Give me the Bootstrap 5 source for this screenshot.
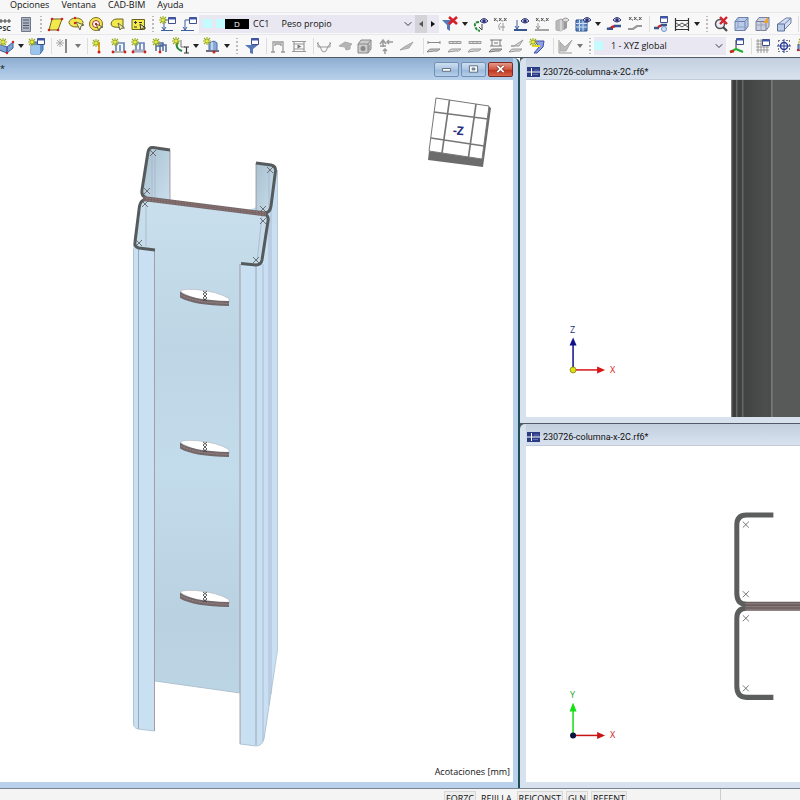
<!DOCTYPE html>
<html lang="es">
<head>
<meta charset="utf-8">
<meta name="viewport" content="width=device-width, initial-scale=1">
<title>230726-columna-x-2C.rf6*</title>
<link rel="stylesheet" href="https://cdn.jsdelivr.net/npm/bootstrap@5.3.0/dist/css/bootstrap.min.css">
<style>
body{font-family:"Open Sans","Noto Sans",sans-serif;font-size:9px;line-height:12px;color:#111;background:#f7f7f7}
.app-menu{height:12px;padding-left:10px;gap:12px;line-height:10px}
.app-menu a{color:#111}
.tool-row{height:22px;overflow:hidden;background:#f8f8f8;border-top:1px solid #e8e8ec}
.tool-row>*{flex:none}
.row-a>.tg:first-child{margin-left:-6px}
.row-b{height:23px;padding-bottom:1px}
.row-b>.tg:first-child{margin-left:-5px}
.tg{display:grid;grid-auto-flow:column;grid-auto-columns:1fr}
.n1{width:21px}.n2{width:42px}.n4{width:83px}.n5{width:103px}.n6{width:123px}
.tool-row button{border:0;padding:0;background:none;display:flex;align-items:center;justify-content:center}
.tool-row .tg svg{width:18px;height:18px}
.drop{width:10px;height:20px}
.drop::after{content:"";border:3px solid transparent;border-top:4px solid #222;border-bottom:0}
.dim::after{border-top-color:#777}
.sep{width:5px;height:16px;border-right:1px solid #ddd}
.sep-w{width:7px}
.grip{width:9px;height:16px;background:radial-gradient(circle,#bbb 1px,transparent 1px) center/4px 4px repeat-y}
.combo{height:18px;background:#e9e8f2}
.combo-case{width:240px}
.combo-axes{width:132px}
.swatch{width:9px;height:9px;background:#c4fbff}
.case-tag{width:24px;height:10px;background:#000;color:#fff;line-height:10px;font-size:8px}
.combo .form-select{font-size:9px;line-height:12px;border:0;border-radius:0;background-color:transparent;background-size:8px 8px;background-position:right 3px center;padding:0 14px 0 0;color:#111;min-height:0}
.step{width:12px;height:18px}
.tool-row .step-off{background:#d4d4d8}
.work{border-top:1px solid #4f5a66;min-height:0}
.win{background:#d8e2ef;padding:0 0 6px 6px;flex:1 1 0;min-height:0}
.win-main{flex:0 0 65%;background:#b9d1ea;padding:0 5px 6px 0;border-right:2px solid #1e4f55;border-radius:0 6px 0 0}
.side{background:#4f5a66;min-width:0;gap:1px}
.side .win{border-radius:5px 0 0 0}
.bar{height:22px;background:linear-gradient(#8fadd0,#a3c0e0 50%,#b9d1ea)}
.side .bar{background:linear-gradient(#c3cfde,#d8e2ef);padding:6px 0 0 1px;gap:3px;font-family:Roboto,"Open Sans",sans-serif;border-bottom:1px solid #c2ccd9}
.bar svg{width:13px;height:10px}
.win-btns{gap:2px}
.win-btn{width:25px;height:15px;padding:0;border:1px solid #6f8fb5;border-radius:2px;background:linear-gradient(#cfdff0,#a9c5e2 50%,#98b7d9 51%,#b5cfea);display:flex;align-items:center;justify-content:center}
.win-close{border-color:#7c2a22;background:linear-gradient(#e59a8a,#d0533d 50%,#bb2f1a 51%,#d8654c)}
.canvas{background:#fff;min-height:0;overflow:hidden}
.canvas>svg{display:block;width:100%;height:100%}
.units{right:3px;bottom:4px}
.app-status{height:12px;overflow:hidden;border-top:1px solid #7b858f;background:#f4f4f4;padding-left:444px;gap:3px}
.app-status button{border:1px solid #d8d8d8;background:#ededed;padding:0 1px;font-size:9px;line-height:12px;margin-top:2px;height:16px;color:#111}
.app-status .flat{background:none;border-color:transparent}
.app-status .rule{margin-left:90px;border-left:1px solid #ccc}
</style>
<script src="https://cdn.jsdelivr.net/npm/bootstrap@5.3.0/dist/js/bootstrap.bundle.min.js"></script>
</head>
<body class="vh-100 d-flex flex-column overflow-hidden m-0">
<svg width="0" height="0" class="position-absolute" aria-hidden="true">
<defs>
<linearGradient id="steel" x1="0" x2="1"><stop offset="0" stop-color="#3a3d3c"/><stop offset=".5" stop-color="#4b4e4d"/><stop offset="1" stop-color="#454847"/></linearGradient>
<linearGradient id="web" x1="0" y1="0" x2="0" y2="1"><stop offset="0" stop-color="#c9dfee"/><stop offset=".3" stop-color="#bdd5e4"/><stop offset=".55" stop-color="#c3dceb"/><stop offset=".85" stop-color="#b9d1e1"/><stop offset="1" stop-color="#bcd5e5"/></linearGradient>
<linearGradient id="lip" x1="0" y1="0" x2="1" y2="1"><stop offset="0" stop-color="#a9c0cf"/><stop offset="1" stop-color="#c9dfee"/></linearGradient>
<g id="burst"><path d="M4 0v8M0 4h8M1 1l6 6M7 1l-6 6" stroke="#9aa81a" stroke-width="1.1"/><circle cx="4" cy="4" r="1.6" fill="#e8ec3c"/></g>
<g id="pane"><path d="M.5.500h7v6h-7z" fill="#fff" stroke="#3f4f8c"/><path d="M.5.500h7v2h-7z" fill="#3f56a8"/></g>
<g id="eye"><path d="M0 3q4-5 8 0q-4 4-8 0z" fill="#dde" stroke="#2c3470"/><circle cx="4" cy="3" r="1.800" fill="#27307c"/></g>
<g id="tick" stroke="#555" stroke-width=".8"><path d="M-3-3L3 3M3-3L-3 3"/></g>
<g id="xxx" stroke="#555" stroke-width="1"><path d="M0 0l2.500 3M2.500 0L0 3M5 0l2.500 3M7.500 0L5 3M10 0l2.500 3M12.500 0L10 3M3.500 2.500v1M8.700 2.500v1"/></g>
<g id="cubeshape"><path d="M0 4l3-4h10v9l-3 4H0zM0 4h10v9M10 4l3-4"/></g>
</defs>
<symbol id="i-calc" viewBox="0 0 18 18"><path d="M4.500 2.500h9v14h-9z" fill="#aeb6c4" stroke="#6f788a"/><path d="M6 5h6M6 8h6M6 10.500h6M6 13h6" stroke="#4c5568"/></symbol>
<symbol id="i-poly" viewBox="0 0 18 18"><path d="M6 4h10l-4 11H3z" fill="#f4e94c" stroke="#6b651a"/><g fill="#c22"><circle cx="6" cy="4" r="1.300"/><circle cx="16" cy="4" r="1.300"/><circle cx="12" cy="15" r="1.300"/><circle cx="3" cy="15" r="1.300"/></g></symbol>
<symbol id="i-ell" viewBox="0 0 18 18"><ellipse cx="9" cy="7.500" rx="7" ry="4.500" fill="#f4e94c" stroke="#7c6a20"/><path d="M9 7l4 8 1-4 3-1z" fill="#fff6a0" stroke="#665"/><circle cx="8" cy="3" r="1.200" fill="#c22"/><circle cx="8" cy="8" r="1.200" fill="#c22"/></symbol>
<symbol id="i-ring" viewBox="0 0 18 18"><circle cx="9" cy="9" r="6.500" fill="#f4e94c" stroke="#7c6a20"/><circle cx="9" cy="9" r="3.500" fill="#fff" stroke="#a33"/><path d="M9 9l3 7 1-3 3-1z" fill="#f4e94c" stroke="#665"/><circle cx="9" cy="9" r="1.200" fill="#c22"/></symbol>
<symbol id="i-blob" viewBox="0 0 18 18"><path d="M3 9q1-5 6-5h6v9q-7-1-9-1-3-1-3-3z" fill="#f4e94c" stroke="#6b651a"/><path d="M10 8l2 7 1.500-2 3 0z" fill="#fff6a0" stroke="#665"/></symbol>
<symbol id="i-calcy" viewBox="0 0 18 18"><path d="M3 4.500h12.500v10H3z" fill="#f4e94c" stroke="#6b651a"/><path d="M5 7.500h3M6.500 6v3M5 12h3M10 7.500h3M11 9l1 6 1.500-2 3 0z" stroke="#333" fill="#fff6a0"/></symbol>
<symbol id="i-newload" viewBox="0 0 18 18"><path d="M2 5h9M5 5v10M2 15.500h12M3 12l2 3 2-3" stroke="#3c5f9e" fill="none"/><use href="#burst" y="1"/><use href="#pane" x="9" y="2"/></symbol>
<symbol id="i-load" viewBox="0 0 18 18"><use href="#pane" x="9" y="2"/><path d="M5 5v10M1 15.500h13M3 12l2 3 2-3M5 5h4" stroke="#3c5f9e" fill="none"/></symbol>
<symbol id="i-funx" viewBox="0 0 18 18"><path d="M1 5h12l-4 5v6l-3-2v-4z" fill="#5577b8"/><path d="M8 2l8 7M16 2L8 9" stroke="#d5202a" stroke-width="2.600"/></symbol>
<symbol id="i-eyeg" viewBox="0 0 18 18"><use href="#eye" x="9" y="3"/><path d="M8 7q-5 0-4 4t5 5" stroke="#278a3c" fill="none" stroke-dasharray="3 1" stroke-width="2"/><path d="M11 9v6M8 12l3 3" stroke="#444"/></symbol>
<symbol id="i-xa" viewBox="0 0 18 18"><use href="#xxx" x="2" y="3"/><path d="M9 8q-4 2-1 7M11 8v8M8 12h5" stroke="#999" fill="none"/></symbol>
<symbol id="i-eyed" viewBox="0 0 18 18"><use href="#eye" x="9" y="3"/><path d="M5 5v9M3 11l2 3 2-3" stroke="#3c5f9e" fill="none"/><path d="M2 15h13" stroke="#35558f" stroke-width="2"/></symbol>
<symbol id="i-xb" viewBox="0 0 18 18"><use href="#xxx" x="3" y="3"/><path d="M5 8v6M3 11l2 3 2-3" stroke="#999" fill="none"/><path d="M2 15h14" stroke="#888" stroke-width="1.500"/></symbol>
<symbol id="i-gcube" viewBox="0 0 18 18"><path d="M3 6l5-2 3 1v9l-3 2-5-1z" fill="#bbb" stroke="#aaa"/><path d="M8 5v11" stroke="#eee"/><path d="M11 6l3-1v8l-3 2z" fill="#999"/><path d="M9 5q4-4 7 0q-3 4-7 0z" fill="#ddd" stroke="#999"/></symbol>
<symbol id="i-grideye" viewBox="0 0 18 18"><path d="M2 5h11v11H2z" fill="#5d88c4" stroke="#2d4f88"/><path d="M5.500 5v11M9 5v11M2 8.500h11M2 12h11" stroke="#cfe0f4"/><use href="#eye" x="9" y="2"/></symbol>
<symbol id="i-eyer" viewBox="0 0 18 18"><use href="#eye" x="8" y="2"/><path d="M2 14l5-1.500V14zM2 13.500h5" stroke="#35558f" stroke-width="2"/><path d="M6 12.500l4-1.500" stroke="#c22" stroke-width="2.500"/><path d="M9 11h7" stroke="#35558f" stroke-width="2.500"/></symbol>
<symbol id="i-xc" viewBox="0 0 18 18"><use href="#xxx" x="3" y="2"/><path d="M2 14h5l4-3h5" stroke="#999" stroke-width="2.200" fill="none"/></symbol>
<symbol id="i-res" viewBox="0 0 18 18"><use href="#pane" x="8" y="1"/><path d="M2 13h5" stroke="#35558f" stroke-width="2.500"/><path d="M6 12l4-2" stroke="#c22" stroke-width="2.500"/><path d="M9 10h6" stroke="#35558f" stroke-width="2.500"/><circle cx="12" cy="14" r="2.500" fill="#cfe0f4" stroke="#6d94cc"/></symbol>
<symbol id="i-film" viewBox="0 0 18 18"><path d="M2.500 3v13M15.500 3v13M2 5.500h14M2 14.500h14" stroke="#333" fill="none" stroke-width="1.200"/><path d="M3 8l3 2 3-2 3 2 3-2M3 12l3-2 3 2 3-2 3 2" stroke="#555" fill="none"/></symbol>
<symbol id="i-zoomx" viewBox="0 0 18 18"><circle cx="8" cy="9" r="4.500" fill="#e8eef6" stroke="#555" stroke-width="1.500"/><path d="M11 12l4 4" stroke="#444" stroke-width="2.200"/><path d="M8 2l7 7M15 2L8 9" stroke="#d5202a" stroke-width="2.400"/></symbol>
<symbol id="i-cube1" viewBox="0 0 18 18"><use href="#cubeshape" x="2" y="2.500" fill="#b9cbe8" stroke="#6b80aa"/><path d="M5 3v9h10M5 12l-3 3" stroke="#8ba0c8" fill="none"/></symbol>
<symbol id="i-cube2" viewBox="0 0 18 18"><use href="#cubeshape" x="2" y="2.500" fill="#c9cfe0" stroke="#7b809a"/><path d="M2 10h10M7 7v9" stroke="#98a0b8"/><path d="M9 8l5-6v6z" fill="#eda32c"/></symbol>
<symbol id="i-cube3" viewBox="0 0 18 18"><path d="M3 9l8-6h5v5l-6 6" fill="#d5def0" stroke="#6b80aa"/><path d="M2.500 9h7v7h-7z" fill="#b9cbe8" stroke="#5b709a"/><path d="M9.500 9L16 3" stroke="#6b80aa"/></symbol>
<symbol id="i-solid" viewBox="0 0 18 18"><path d="M2 7l8 3v6l-8-3zM10 10l6-5v6l-6 5z" fill="#7fa3d8" stroke="#3d5f9c"/><use href="#burst" x="2" y="1"/><g fill="#c22"><circle cx="10" cy="16" r="1.200"/><circle cx="16" cy="5" r="1.200"/><circle cx="2" cy="13" r="1.200"/></g></symbol>
<symbol id="i-box" viewBox="0 0 18 18"><path d="M3 8l3-3h9v8l-3 4H3z" fill="#5d92cc" stroke="#3d6fa8"/><path d="M3 8h9v9H3z" fill="#9cc4ec"/><use href="#burst" y="1"/><use href="#pane" x="9" y="1"/></symbol>
<symbol id="i-linex" viewBox="0 0 18 18"><g stroke="#aaa"><path d="M6 2v8M2 6h8M3 3l6 6M9 3L3 9"/></g><path d="M12 2v14" stroke="#777" stroke-width="1.700"/></symbol>
<symbol id="i-node" viewBox="0 0 18 18"><path d="M10 5v9" stroke="#e0a020" stroke-width="2"/><use href="#burst" x="3" y="2"/><circle cx="10" cy="15" r="1.500" fill="#c22"/></symbol>
<symbol id="i-beam" viewBox="0 0 18 18"><path d="M6 14V6h8v8M10 8v6" stroke="#6587bc" stroke-width="1.700" fill="none"/><path d="M3 15h12" stroke="#777"/><use href="#burst" x="1" y="1"/><g fill="#c22"><circle cx="3" cy="15" r="1.400"/><circle cx="15" cy="15" r="1.400"/></g></symbol>
<symbol id="i-beams" viewBox="0 0 18 18"><path d="M6 14V6h8v8M10 6v8" stroke="#6587bc" stroke-width="1.700" fill="none"/><path d="M3 13h12v2H3z" fill="#b8c4dc" stroke="#99a"/><use href="#burst" x="1" y="1"/><g fill="#c22"><circle cx="3" cy="15" r="1.400"/><circle cx="15" cy="15" r="1.400"/></g></symbol>
<symbol id="i-frames" viewBox="0 0 18 18"><path d="M5 14V6h7v8M9 15V8h6v7M5 9h7" stroke="#4d6a9c" stroke-width="1.500" fill="none"/><use href="#burst" x="1" y="1"/><circle cx="9" cy="15" r="1.400" fill="#c22"/></symbol>
<symbol id="i-sect" viewBox="0 0 18 18"><path d="M6 4q-4 7 4 10" stroke="#278a3c" stroke-width="2" fill="none"/><path d="M9 3v7h4" stroke="#777" fill="none"/><use href="#burst"/><path d="M12 10h5M14.500 10v6M12 16h5" stroke="#333" stroke-width="1.200"/></symbol>
<symbol id="i-bars" viewBox="0 0 18 18"><path d="M6 6l5-2 3 2v8H6z" fill="#86a9d8" stroke="#4a6ea8"/><path d="M9 5v9" stroke="#fff"/><path d="M3 14h13" stroke="#6b6f80" stroke-width="2"/><use href="#burst"/><circle cx="11" cy="15" r="1.500" fill="#c22"/></symbol>
<symbol id="i-funnel" viewBox="0 0 18 18"><path d="M2 8h13l-5 4v5l-3-1v-4z" fill="#5577b8"/><use href="#pane" x="8" y="1"/></symbol>
<symbol id="i-arch" viewBox="0 0 18 18"><path d="M4 15V5h10v10M2 15h4M12 15h4M6 9V7h6v2" stroke="#999" fill="none" stroke-width="1.300"/></symbol>
<symbol id="i-play" viewBox="0 0 18 18"><path d="M4 4v11M14 4v11M2 4.500h14M2 14.500h14M4 7h10v5H4z" stroke="#999" fill="none" stroke-width="1.200"/><path d="M7.500 7.500l4 2-4 2z" fill="#777"/></symbol>
<symbol id="i-curve" viewBox="0 0 18 18"><path d="M3 5v5h12V5M2 6q3 2 5 8 2 2 4 0 2-6 5-8" stroke="#999" fill="none"/></symbol>
<symbol id="i-wedge" viewBox="0 0 18 18"><path d="M3 9l6-4 7 2-2 2 0 3-4 1-1-3z" fill="#b4b4b4" stroke="#aaa"/></symbol>
<symbol id="i-die" viewBox="0 0 18 18"><use href="#cubeshape" x="2" y="3" fill="#ccc" stroke="#888"/><circle cx="7" cy="11.500" r="2.500" fill="#888"/><path d="M13 8v5" stroke="#888"/></symbol>
<symbol id="i-arrows" viewBox="0 0 18 18"><path d="M6 3v7M3 7l3-4 3 4M3 9h6M10 5h6M12 3l-2 2 2 2M8 17v-4M6 14l2-2 2 2" stroke="#999" fill="none" stroke-width="1.500"/></symbol>
<symbol id="i-blade" viewBox="0 0 18 18"><path d="M2 13l4-3 9-5-4 6z" fill="#bbb" stroke="#aaa"/></symbol>
<symbol id="i-ra" viewBox="0 0 18 18"><path d="M3 5.500h12M3 4v3M15 4v3M2 15q2-4 6-3h7q-2 3-6 2z" stroke="#888" fill="#ccc"/></symbol>
<symbol id="i-rb" viewBox="0 0 18 18"><path d="M3 4.500h12v2H3zM7 4v3M11 4v3M2 15q2-4 6-3h7q-2 3-6 2z" stroke="#999" fill="#ddd"/></symbol>
<symbol id="i-rc" viewBox="0 0 18 18"><path d="M3 3h12M3 9h12M5 3v6M13 3v6M7 6h4M2 15q2-4 6-3h7q-2 3-6 2z" stroke="#777" fill="#ccc"/></symbol>
<symbol id="i-rd" viewBox="0 0 18 18"><path d="M4 9l3 0 9-6-4 6zM2 15q2-4 6-3h7q-2 3-6 2z" stroke="#999" fill="#ddd"/></symbol>
<symbol id="i-re" viewBox="0 0 18 18"><path d="M7 4h9l-1 6-6 6H6l5-6z" fill="#8d9fe0" stroke="#3c4fac"/><path d="M4 9l8 0" stroke="#e6dc20" stroke-width="2"/><use href="#burst" x="1" y="1"/></symbol>
<symbol id="i-diag" viewBox="0 0 18 18"><path d="M3 3v13h13" stroke="#999" fill="none"/><path d="M4 5l5 5 7-7-6 11H4z" fill="#bbb" stroke="#aaa"/></symbol>
<symbol id="i-axes" viewBox="0 0 18 18"><path d="M8 12V3" stroke="#333"/><use href="#pane" x="8" y="1"/><path d="M8 12l-6 3" stroke="#2b2" stroke-width="2"/><path d="M2 15l4-1" stroke="#c22" stroke-width="2.500"/><path d="M8 12l7 3" stroke="#2a3" stroke-width="2"/></symbol>
<symbol id="i-gridp" viewBox="0 0 18 18"><path d="M2 4h13M2 7h13M2 10h13M2 13h13M4 2v14M7 2v14M10 2v14M13 2v14" stroke="#888" stroke-width=".8"/><use href="#pane" x="8" y="2"/></symbol>
<symbol id="i-snap" viewBox="0 0 18 18"><path d="M3 3.500h12M3 14.500h12M3.500 3v12M14.500 3v12" stroke="#778" stroke-dasharray="2 2"/><circle cx="9" cy="9" r="3.500" fill="none" stroke="#2c3f9c" stroke-width="1.500"/><path d="M9 2v14M2 9h14" stroke="#2c3f9c"/></symbol>
<symbol id="i-flag" viewBox="0 0 13 10"><path d="M0 0h13v10H0z" fill="#2b3c86"/><path d="M0 5h13M4.500 1v8" stroke="#fff"/><path d="M7 3h5M6 7.500h5" stroke="#6672b4"/></symbol>
</svg>

<nav class="app-menu d-flex flex-shrink-0" aria-label="Menú">
<a class="text-decoration-none" href="#">Opciones</a><a class="text-decoration-none" href="#">Ventana</a><a class="text-decoration-none" href="#">CAD-BIM</a><a class="text-decoration-none" href="#">Ayuda</a>
</nav>

<div class="tool-row row-a d-flex align-items-center flex-shrink-0" role="toolbar" aria-label="Casos de carga">
<div class="tg n2"><button aria-label="PSC"><svg viewBox="0 0 18 18"><path d="M3 6h12M5 4v4M9 4v4M13 4v4" stroke="#444" fill="none"/><text x="2" y="16" font-size="7" font-weight="700" fill="#333">PSC</text></svg></button><button aria-label="Calculadora"><svg><use href="#i-calc"/></svg></button></div>
<span class="grip"></span>
<div class="tg n5"><button aria-label="Polígono"><svg><use href="#i-poly"/></svg></button><button aria-label="Elipse"><svg><use href="#i-ell"/></svg></button><button aria-label="Anillo"><svg><use href="#i-ring"/></svg></button><button aria-label="Contorno"><svg><use href="#i-blob"/></svg></button><button aria-label="Fórmula"><svg><use href="#i-calcy"/></svg></button></div>
<span class="grip"></span>
<div class="tg n2"><button aria-label="Nueva carga"><svg><use href="#i-newload"/></svg></button><button aria-label="Carga"><svg><use href="#i-load"/></svg></button></div>
<div class="combo combo-case d-flex align-items-center">
<span class="swatch ms-1"></span><span class="swatch ms-1"></span><span class="case-tag text-center">D</span>
<label class="ms-1" for="lc">CC1</label>
<select id="lc" class="form-select flex-fill w-auto ms-2 ps-1"><option>Peso propio</option></select>
<button class="step step-off" aria-label="Anterior"><svg width="4" height="6"><path d="M4 0v6L0 3z" fill="#555"/></svg></button><button class="step" aria-label="Siguiente"><svg width="4" height="6"><path d="M0 0v6l4-3z" fill="#111"/></svg></button>
</div>
<div class="tg n1"><button aria-label="Quitar filtro"><svg><use href="#i-funx"/></svg></button></div><button class="drop" aria-label="Más"></button>
<div class="tg n6"><button aria-label="Ver apoyos"><svg><use href="#i-eyeg"/></svg></button><button aria-label="Valores de apoyos"><svg><use href="#i-xa"/></svg></button><button aria-label="Ver cargas"><svg><use href="#i-eyed"/></svg></button><button aria-label="Valores de cargas"><svg><use href="#i-xb"/></svg></button><button aria-label="Sólido"><svg><use href="#i-gcube"/></svg></button><button aria-label="Ver malla"><svg><use href="#i-grideye"/></svg></button></div><button class="drop" aria-label="Más"></button>
<div class="tg n2"><button aria-label="Ver resultados"><svg><use href="#i-eyer"/></svg></button><button aria-label="Valores de resultados"><svg><use href="#i-xc"/></svg></button></div>
<span class="sep"></span>
<div class="tg n2"><button aria-label="Resultados"><svg><use href="#i-res"/></svg></button><button aria-label="Animación"><svg><use href="#i-film"/></svg></button></div><button class="drop" aria-label="Más"></button>
<span class="grip"></span>
<div class="tg n4"><button aria-label="Zoom"><svg><use href="#i-zoomx"/></svg></button><button aria-label="Vista 1"><svg><use href="#i-cube1"/></svg></button><button aria-label="Vista 2"><svg><use href="#i-cube2"/></svg></button><button aria-label="Vista 3"><svg><use href="#i-cube3"/></svg></button></div>
<span class="sep"></span>
</div>

<div class="tool-row row-b d-flex align-items-center flex-shrink-0" role="toolbar" aria-label="Modelo">
<div class="tg n1"><button aria-label="Sólido nuevo"><svg><use href="#i-solid"/></svg></button></div><button class="drop" aria-label="Más"></button>
<div class="tg n1"><button aria-label="Caja"><svg><use href="#i-box"/></svg></button></div><span class="sep"></span>
<div class="tg n1"><button aria-label="Línea"><svg><use href="#i-linex"/></svg></button></div><button class="drop dim" aria-label="Más"></button><span class="sep"></span>
<div class="tg n5"><button aria-label="Nudo"><svg><use href="#i-node"/></svg></button><button aria-label="Barra"><svg><use href="#i-beam"/></svg></button><button aria-label="Barras"><svg><use href="#i-beams"/></svg></button><button aria-label="Pórtico"><svg><use href="#i-frames"/></svg></button><button aria-label="Sección"><svg><use href="#i-sect"/></svg></button></div><button class="drop" aria-label="Más"></button>
<div class="tg n1"><button aria-label="Conjunto"><svg><use href="#i-bars"/></svg></button></div><button class="drop" aria-label="Más"></button>
<span class="grip"></span>
<div class="tg n1"><button aria-label="Filtro"><svg><use href="#i-funnel"/></svg></button></div><span class="sep"></span>
<div class="tg n2"><button aria-label="Marco"><svg><use href="#i-arch"/></svg></button><button aria-label="Reproducir"><svg><use href="#i-play"/></svg></button></div><span class="sep"></span>
<div class="tg n5"><button aria-label="Diagrama"><svg><use href="#i-curve"/></svg></button><button aria-label="Superficie"><svg><use href="#i-wedge"/></svg></button><button aria-label="Volumen"><svg><use href="#i-die"/></svg></button><button aria-label="Reacciones"><svg><use href="#i-arrows"/></svg></button><button aria-label="Corte"><svg><use href="#i-blade"/></svg></button></div><span class="sep sep-w"></span>
<div class="tg n6"><button aria-label="Resultado 1"><svg><use href="#i-ra"/></svg></button><button aria-label="Resultado 2"><svg><use href="#i-rb"/></svg></button><button aria-label="Resultado 3"><svg><use href="#i-rb"/></svg></button><button aria-label="Resultado 4"><svg><use href="#i-rc"/></svg></button><button aria-label="Resultado 5"><svg><use href="#i-rd"/></svg></button><button aria-label="Resultado nuevo"><svg><use href="#i-re"/></svg></button></div><span class="sep sep-w"></span>
<div class="tg n1"><button aria-label="Gráfico"><svg><use href="#i-diag"/></svg></button></div><button class="drop dim" aria-label="Más"></button>
<span class="grip"></span>
<div class="combo combo-axes d-flex align-items-center"><span class="swatch"></span><select class="form-select flex-fill w-auto ms-2" aria-label="Sistema de coordenadas"><option>1 - XYZ global</option></select></div>
<div class="tg n1"><button aria-label="Ejes"><svg><use href="#i-axes"/></svg></button></div><span class="sep"></span>
<div class="tg n2"><button aria-label="Rejilla"><svg><use href="#i-gridp"/></svg></button><button aria-label="Forzar cursor"><svg><use href="#i-snap"/></svg></button></div>
<div class="tg n1"><button aria-label="Plano"><svg><use href="#i-solid"/></svg></button></div>
</div>

<main class="work d-flex flex-fill">
<section class="win-main d-flex flex-column" aria-label="Vista principal">
<header class="bar d-flex align-items-center flex-shrink-0">
<span>*</span>
<div class="win-btns d-flex ms-auto flex-shrink-0">
<button class="win-btn" aria-label="Minimizar"><svg viewBox="0 0 13 11"><path d="M2 5h9v3H2z" fill="#fff" stroke="#567"/></svg></button>
<button class="win-btn" aria-label="Restaurar"><svg viewBox="0 0 13 11"><path d="M2 2h9v7H2z" fill="#fff" stroke="#567"/><path d="M5 4.500h3v2H5z" fill="#9bd" stroke="#567"/></svg></button>
<button class="win-btn win-close" aria-label="Cerrar"><svg viewBox="0 0 13 11"><path d="M3 2l7 7M10 2L3 9" stroke="#7a2a20" stroke-width="3.500"/><path d="M3 2l7 7M10 2L3 9" stroke="#fff" stroke-width="2"/></svg></button>
</div>
</header>
<div class="canvas flex-fill position-relative">
<svg viewBox="0 80 513 702" preserveAspectRatio="xMinYMin meet" role="img" aria-label="Columna en 3D">
<path d="M277 172V650L270 700 264 739Q262 746 256 746L240 744V693L155 681V731L138 729Q133 727 133 722V245H155L262 205z" fill="#c6deef"/>
<path d="M148 149L170 150V202L143 196z" fill="url(#lip)"/><path d="M256 163L276 167 269 213 256 211z" fill="url(#lip)"/>
<path d="M142 200L268 215 262 264 240 263V693L155 681V249L135 247z" fill="url(#web)"/>
<path d="M133 249h22v482l-17-2q-5-2-5-7zM240 264l22 1 6-42h9V650L264 739Q262 746 256 746L240 744z" fill="#c8e0f2"/>
<g fill="none" stroke-width=".8"><path d="M138.500 249V729M256 266V745" stroke="#8d9aab"/><path d="M154.500 250V731M240 264V744M170 150V200M256 163V210" stroke="#9a8b93"/><path d="M263 264V741M269 218V705M271 210V694M152 154V197M155 155V198M146 205V246M262 216L257 262M269 169V212" stroke="#a7b3cb"/><path d="M133.500 249V722Q133 728 138 729L154 731M155 681L240 693M240 744L256 746Q262 746 264 739L270 700 277.500 650V170" stroke="#a8bccb"/></g>
<g fill="none" stroke="#555a5c" stroke-width="3"><path d="M170 150L153 147.500Q149 147 148 152L142 190Q141 196 146 197.500"/><path d="M256 163L271 165Q276 166 275.500 171L271 206Q270 213 265 213"/><path d="M155 250L139 248Q134 247 135 242L139.500 206Q141 199 147 199.500"/><path d="M241 263.500L256 265Q261 265 262 260L268 221Q269 216 265 214"/></g>
<path d="M143 198.500L266 214" stroke="#716568" stroke-width="5"/><path d="M146 198L266 213M146 200L266 215" stroke="#a07774" stroke-width=".8" stroke-dasharray="2 1"/>
<g><use href="#tick" x="153" y="153"/><use href="#tick" x="147" y="191"/><use href="#tick" x="270" y="170"/><use href="#tick" x="263" y="209"/><use href="#tick" x="145" y="204"/><use href="#tick" x="139" y="243"/><use href="#tick" x="263" y="221"/><use href="#tick" x="256" y="260"/></g>
<g id="hole"><path d="M180.500 292L182 290Q186 289 196 289.500 218 291.500 229 298.500V303Q200 303 180.500 292z" fill="#fff" stroke="#a9b2ba" stroke-width=".6"/><path d="M180 291.500Q190 300 229 301V306Q194 305.500 180 297.500z" fill="#72686b"/><path d="M181 295Q193 302.500 229 303.500" fill="none" stroke="#b08c86" stroke-width=".8" stroke-dasharray="2 1"/><path d="M203 291l4 3-4 4 4 3M207 291l-4 3 4 4-4 3" fill="none" stroke="#333" stroke-width=".8"/></g>
<use href="#hole" y="151"/><use href="#hole" y="301"/>
<path d="M429 151L482 159 483 167 428 160zM482 159L488 106 491 108 483 167z" fill="#6c6c6c"/>
<path d="M436 98L489 106 482 159 429 151z" fill="#fff" stroke="#777"/>
<path d="M434 112L488 119M431 138L484 146M449.500 100L442 153M476 104L468.500 157" stroke="#777" stroke-width="1.700" fill="none"/>
<text x="453" y="135" font-size="12" font-weight="700" fill="#25307f" transform="rotate(4 459 130)">-Z</text>
</svg>
<div class="units position-absolute">Acotaciones [mm]</div>
</div>
</section>
<div class="side d-flex flex-column flex-fill">
<section class="win d-flex flex-column" aria-label="Vista XZ">
<header class="bar d-flex align-items-center flex-shrink-0"><svg><use href="#i-flag"/></svg><span>230726-columna-x-2C.rf6*</span></header>
<div class="canvas flex-fill"><svg viewBox="526 80 274 336" preserveAspectRatio="xMinYMin slice" role="img" aria-label="Alzado">
<path d="M731 79h69v338h-69z" fill="url(#steel)"/><path d="M771 79h29v338h-29z" fill="#575a59"/>
<path d="M731.500 79v338M736.500 79v338M742.500 79v338" stroke="#777b79"/><path d="M771.500 79v338" stroke="#8c908e"/>
<path d="M573 370V343" stroke="#10108a" stroke-width="1.500"/><path d="M573 337l3.500 8h-7z" fill="#10108a"/><path d="M573 369.500h25" stroke="#d81414" stroke-width="1.500"/><path d="M605 369.500l-8-3.500v7z" fill="#d81414"/><circle cx="573" cy="369.500" r="3" fill="#dede10" stroke="#77770c" stroke-width=".7"/>
<text x="570" y="333" font-size="9" fill="#25307f">Z</text><text x="610" y="373" font-size="9" fill="#d81414">X</text>
</svg></div>
</section>
<section class="win d-flex flex-column" aria-label="Vista XY">
<header class="bar d-flex align-items-center flex-shrink-0"><svg><use href="#i-flag"/></svg><span>230726-columna-x-2C.rf6*</span></header>
<div class="canvas flex-fill"><svg viewBox="526 446 274 336" preserveAspectRatio="xMinYMin slice" role="img" aria-label="Sección">
<g fill="none" stroke="#5c5e5e" stroke-width="5"><path d="M773 515H746Q736.500 515 736.500 525V593Q736.500 604 746 604"/><path d="M746 608Q736.500 608 736.500 618V686Q736.500 697 746 697H773"/></g>
<path d="M745 606H800" stroke="#675f60" stroke-width="9"/><path d="M745 603.500H800M745 606.500H800M745 609H800" stroke="#a08684" stroke-width=".8"/>
<use href="#tick" x="745.500" y="524.500"/><use href="#tick" x="745.500" y="594"/><use href="#tick" x="745.500" y="618"/><use href="#tick" x="745.500" y="688"/>
<path d="M573 734V708" stroke="#14e014" stroke-width="1.500"/><path d="M573 702l3.500 9h-7z" fill="#14e014"/><path d="M573 735h25" stroke="#c81414" stroke-width="1.500"/><path d="M605 735l-8-3.500v7z" fill="#c81414"/><circle cx="573" cy="735" r="3" fill="#0c1440"/>
<text x="570" y="698" font-size="9" fill="#18a818">Y</text><text x="610" y="738" font-size="9" fill="#c81414">X</text>
</svg></div>
</section>
</div>
</main>
<footer class="app-status d-flex flex-shrink-0"><button>FORZC</button><button class="flat">REJILLA</button><button>REJCONST</button><button>GLN</button><button>REFENT</button><span class="rule"></span></footer>
</body>
</html>
